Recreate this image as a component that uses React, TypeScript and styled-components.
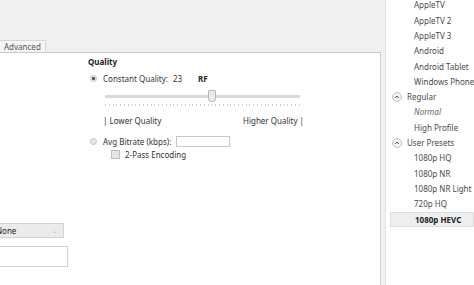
import React from 'react';
import styled, { createGlobalStyle } from 'styled-components';

const Global = createGlobalStyle`
  html, body { margin: 0; padding: 0; background: #f0f0f0; }
  * { box-sizing: border-box; }
`;

const Window = styled.div`
  width: 474px;
  height: 285px;
  display: flex;
  overflow: hidden;
  background: #f0f0f0;
  font-family: "Noto Sans", "Open Sans", sans-serif;
  font-size: 8px;
  color: #333;
`;

const Main = styled.div`
  width: 381px;
  flex: none;
  display: flex;
  flex-direction: column;
`;

const TabStrip = styled.div`
  height: 52px;
  flex: none;
  display: flex;
  align-items: flex-end;
`;

const Tab = styled.div`
  height: 12px;
  margin-left: -1px;
  padding: 0 4px 0 4px;
  border: 1px solid #d6d6d6;
  border-bottom: none;
  background: #f6f6f6;
  color: #555;
  line-height: 11px;
`;

const TabPanel = styled.div`
  flex: 1;
  display: flex;
  background: #fff;
  border-top: 1px solid #c9c9c9;
  border-right: 1px solid #cdcdcd;
  overflow: hidden;
`;

const LeftColumn = styled.div`
  flex: none;
  width: 108px;
  margin-left: -40px;
  padding-top: 170px;
  display: flex;
  flex-direction: column;
  gap: 8px;
`;

const Dropdown = styled.div`
  width: 104px;
  height: 15px;
  display: flex;
  align-items: center;
  justify-content: space-between;
  padding: 0 6px 0 35px;
  background: #ebebeb;
  border: 1px solid #d3d3d3;
  color: #222;
`;

const Chevron = styled.span`
  color: #aaa;
  font-size: 6px;
`;

const TextBox = styled.div`
  width: 108px;
  height: 21px;
  background: #fff;
  border: 1px solid #cfcfcf;
`;

const QualityColumn = styled.div`
  flex: none;
  margin-left: 20px;
  padding-top: 3px;
  display: flex;
  flex-direction: column;
`;

const Title = styled.div`
  height: 12px;
  line-height: 12px;
  font-weight: 700;
  color: #222;
`;

const Row = styled.div<{ $mt: number; $pl?: number; $h?: number }>`
  display: flex;
  align-items: center;
  height: ${(p) => p.$h ?? 12}px;
  margin-top: ${(p) => p.$mt}px;
  padding-left: ${(p) => p.$pl ?? 2}px;
`;

const Radio = styled.span<{ $checked?: boolean }>`
  flex: none;
  width: 7px;
  height: 7px;
  border-radius: 50%;
  border: 1px solid #c4c4c4;
  background: ${(p) =>
    p.$checked ? 'radial-gradient(circle, #555 0 1.3px, #e6e6e6 1.8px)' : '#e8e8e8'};
  margin-right: 6px;
`;

const Label = styled.span<{ $w?: number }>`
  ${(p) => (p.$w ? `width: ${p.$w}px; flex: none;` : '')}
  white-space: nowrap;
  color: #333;
`;

const Strong = styled.span`
  font-weight: 700;
  color: #222;
`;

const Slider = styled.div`
  position: relative;
  width: 195px;
  height: 12px;
  margin: 6px 0 0 17px;
`;

const Track = styled.div`
  position: absolute;
  left: 0;
  right: 0;
  top: 5px;
  height: 3px;
  background: #d9d9d9;
  border-radius: 1px;
`;

const Thumb = styled.div`
  position: absolute;
  top: 0;
  width: 8px;
  height: 12px;
  margin-left: -4px;
  background: #e9e9e9;
  border: 1px solid #b9b9b9;
  border-radius: 1px 1px 3px 3px;
`;

const Ticks = styled.div`
  width: 195px;
  height: 2px;
  margin: 2px 0 0 17px;
  background: repeating-linear-gradient(90deg, #cfcfcf 0 1px, transparent 1px 3.8px);
`;

const Scale = styled.div`
  display: flex;
  justify-content: space-between;
  width: 201px;
  height: 12px;
  line-height: 12px;
  margin: 9px 0 0 15px;
  color: #333;
`;

const Input = styled.div`
  width: 54px;
  height: 11px;
  background: #fff;
  border: 1px solid #c8c8c8;
`;

const Check = styled.span`
  flex: none;
  width: 9px;
  height: 9px;
  background: #e6e6e6;
  border: 1px solid #bdbdbd;
  margin-right: 5px;
`;

const List = styled.div`
  flex: 1;
  margin-left: 4px;
  background: #fff;
  border-left: 1px solid #e4e4e4;
  overflow: hidden;
`;

const ListInner = styled.div`
  margin-top: -2.6px;
  display: flex;
  flex-direction: column;
`;

const Item = styled.div<{ $italic?: boolean; $selected?: boolean }>`
  height: 15.3px;
  line-height: 15.3px;
  white-space: nowrap;
  padding-left: ${(p) => (p.$selected ? 24 : 28)}px;
  margin-left: ${(p) => (p.$selected ? 4 : 0)}px;
  color: ${(p) => (p.$italic ? '#666' : p.$selected ? '#222' : '#4a4a4a')};
  font-style: ${(p) => (p.$italic ? 'italic' : 'normal')};
  font-weight: ${(p) => (p.$selected ? 700 : 400)};
  background: ${(p) => (p.$selected ? '#eeeeee' : 'transparent')};
  border: ${(p) => (p.$selected ? '1px solid #dedede' : 'none')};
  ${(p) => (p.$selected ? 'line-height: 13.3px;' : '')}
`;

const GroupHeader = styled.div`
  height: 15.3px;
  display: flex;
  align-items: center;
  gap: 5px;
  padding-left: 6px;
  color: #4a4a4a;
  white-space: nowrap;
`;

const CollapseIcon = () => (
  <svg width="10" height="10" viewBox="0 0 10 10">
    <circle cx="5" cy="5" r="4.5" fill="#f2f2f2" stroke="#c2c2c2" />
    <path d="M3.2 5.9 L5 4.1 L6.8 5.9" fill="none" stroke="#444" strokeWidth="1" />
  </svg>
);

type Entry = { kind: 'item' | 'header'; text: string; italic?: boolean; selected?: boolean };

const entries: Entry[] = [
  { kind: 'item', text: 'AppleTV' },
  { kind: 'item', text: 'AppleTV 2' },
  { kind: 'item', text: 'AppleTV 3' },
  { kind: 'item', text: 'Android' },
  { kind: 'item', text: 'Android Tablet' },
  { kind: 'item', text: 'Windows Phone' },
  { kind: 'header', text: 'Regular' },
  { kind: 'item', text: 'Normal', italic: true },
  { kind: 'item', text: 'High Profile' },
  { kind: 'header', text: 'User Presets' },
  { kind: 'item', text: '1080p HQ' },
  { kind: 'item', text: '1080p NR' },
  { kind: 'item', text: '1080p NR Light' },
  { kind: 'item', text: '720p HQ' },
  { kind: 'item', text: '1080p HEVC', selected: true },
];

const RF_MAX = 51;

export default function App() {
  const rf = 23;
  const pos = ((RF_MAX - rf) / RF_MAX) * 100;
  return (
    <>
      <Global />
      <Window>
        <Main>
          <TabStrip>
            <Tab>Advanced</Tab>
          </TabStrip>
          <TabPanel>
            <LeftColumn>
              <Dropdown>
                <span>None</span>
                <Chevron>&#8964;</Chevron>
              </Dropdown>
              <TextBox />
            </LeftColumn>
            <QualityColumn>
              <Title>Quality</Title>
              <Row $mt={4}>
                <Radio $checked />
                <Label $w={70}>Constant Quality:</Label>
                <Label $w={25}>{rf}</Label>
                <Strong>RF</Strong>
              </Row>
              <Slider>
                <Track />
                <Thumb style={{ left: `${pos}%` }} />
              </Slider>
              <Ticks />
              <Scale>
                <span>| Lower Quality</span>
                <span>Higher Quality |</span>
              </Scale>
              <Row $mt={8}>
                <Radio />
                <Label $w={73}>Avg Bitrate (kbps):</Label>
                <Input />
              </Row>
              <Row $mt={2} $pl={23} $h={11}>
                <Check />
                <Label>2-Pass Encoding</Label>
              </Row>
            </QualityColumn>
          </TabPanel>
        </Main>
        <List>
          <ListInner>
            {entries.map((e) =>
              e.kind === 'header' ? (
                <GroupHeader key={e.text}>
                  <CollapseIcon />
                  <span>{e.text}</span>
                </GroupHeader>
              ) : (
                <Item key={e.text} $italic={e.italic} $selected={e.selected}>
                  {e.text}
                </Item>
              )
            )}
          </ListInner>
        </List>
      </Window>
    </>
  );
}
